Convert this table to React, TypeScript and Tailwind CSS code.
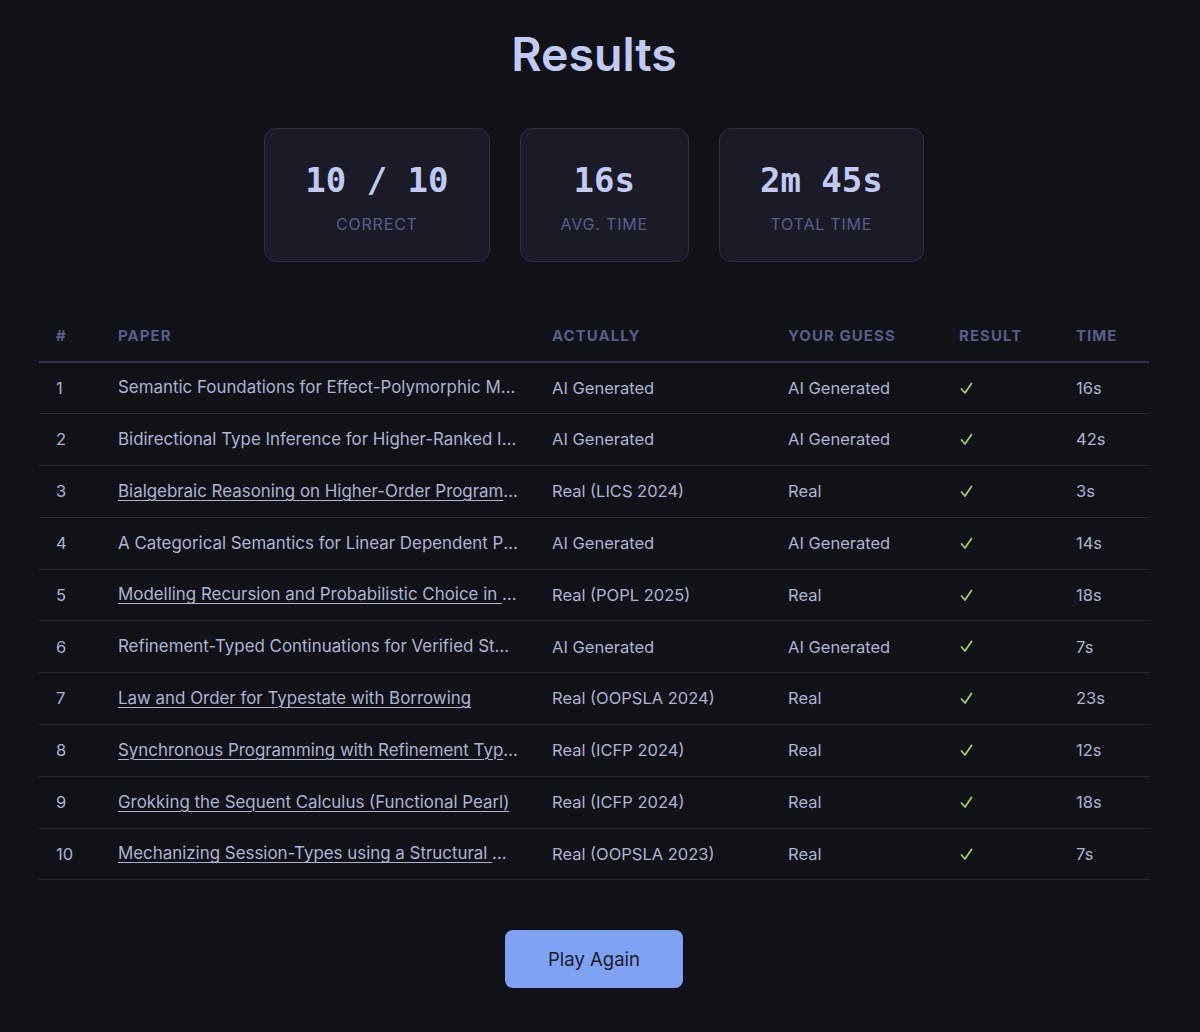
import React from "react";

const rows = [
  { n: 1, title: "Semantic Foundations for Effect-Polymorphic Memory Management", link: false, actual: "AI Generated", guess: "AI Generated", time: "16s" },
  { n: 2, title: "Bidirectional Type Inference for Higher-Ranked Impredicative Polymorphism", link: false, actual: "AI Generated", guess: "AI Generated", time: "42s" },
  { n: 3, title: "Bialgebraic Reasoning on Higher-Order Program Equivalence", link: true, actual: "Real (LICS 2024)", guess: "Real", time: "3s" },
  { n: 4, title: "A Categorical Semantics for Linear Dependent Pattern Matching", link: false, actual: "AI Generated", guess: "AI Generated", time: "14s" },
  { n: 5, title: "Modelling Recursion and Probabilistic Choice in Guarded Type Theory", link: true, actual: "Real (POPL 2025)", guess: "Real", time: "18s" },
  { n: 6, title: "Refinement-Typed Continuations for Verified Stateful Computation", link: false, actual: "AI Generated", guess: "AI Generated", time: "7s" },
  { n: 7, title: "Law and Order for Typestate with Borrowing", link: true, actual: "Real (OOPSLA 2024)", guess: "Real", time: "23s" },
  { n: 8, title: "Synchronous Programming with Refinement Types", link: true, actual: "Real (ICFP 2024)", guess: "Real", time: "12s" },
  { n: 9, title: "Grokking the Sequent Calculus (Functional Pearl)", link: true, actual: "Real (ICFP 2024)", guess: "Real", time: "18s" },
  { n: 10, title: "Mechanizing Session-Types using a Structural View", link: true, actual: "Real (OOPSLA 2023)", guess: "Real", time: "7s" },
];

function Stat({ value, label }: { value: string; label: string }) {
  return (
    <div className="flex flex-col items-center rounded-xl border border-[#2c2e44] bg-[#1a1b26] px-10 pt-[29px] pb-[25px]">
      <div className="text-[34px] font-bold leading-[44px] text-[#c0caf5] [font-family:'DejaVu_Sans_Mono',monospace]">
        {value}
      </div>
      <div className="mt-[10px] text-[16px] uppercase leading-6 tracking-[0.05em] text-[#565f89]">{label}</div>
    </div>
  );
}

function Check() {
  return (
    <svg width="13" height="13" viewBox="0 0 13 13" className="block">
      <path d="M1.5 7 L5 11 L11.5 1.5" fill="none" stroke="#9ece6a" strokeWidth="1.8" strokeLinecap="round" strokeLinejoin="round" />
    </svg>
  );
}

export default function App() {
  return (
    <div className="min-h-[1032px] w-full bg-[#111218] [font-family:Inter,'Noto_Sans',sans-serif]">
      <div className="flex w-[1110px] flex-col items-center pt-[22px] pb-[44px] ml-[39px]">
        <h1 className="text-[46.5px] font-semibold leading-[64px] text-[#c0caf5]">Results</h1>
        <div className="mt-[42px] flex gap-[30px]">
          <Stat value="10 / 10" label="Correct" />
          <Stat value="16s" label="Avg. Time" />
          <Stat value="2m 45s" label="Total Time" />
        </div>
        <table className="mt-[49px] w-full table-fixed border-collapse text-left">
          <colgroup>
            <col className="w-[63px]" />
            <col className="w-[434px]" />
            <col className="w-[236px]" />
            <col className="w-[171px]" />
            <col className="w-[117px]" />
            <col className="w-[89px]" />
          </colgroup>
          <thead>
            <tr className="border-b-2 border-[#2f3250] text-[15px] font-bold uppercase tracking-[0.07em] text-[#565f89]">
              <th className="h-[51px] px-[17px] font-bold">#</th>
              <th className="px-4 font-bold">Paper</th>
              <th className="px-4 font-bold">Actually</th>
              <th className="px-4 font-bold">Your Guess</th>
              <th className="px-4 font-bold">Result</th>
              <th className="px-4 font-bold">Time</th>
            </tr>
          </thead>
          <tbody className="text-[16.5px] text-[#adb4d2]">
            {rows.map((r) => (
              <tr key={r.n} className="h-[51.8px] border-b border-[#262838]">
                <td className="px-[17px]">{r.n}</td>
                <td className="px-4">
                  <div className="w-[400px] truncate text-[16.9px]">
                    {r.link ? (
                      <a href="#" className="underline decoration-1 underline-offset-[3px]">
                        {r.title}
                      </a>
                    ) : (
                      r.title
                    )}
                  </div>
                </td>
                <td className="px-4">{r.actual}</td>
                <td className="px-4">{r.guess}</td>
                <td className="px-4 pl-[17px]">
                  <Check />
                </td>
                <td className="px-4">{r.time}</td>
              </tr>
            ))}
          </tbody>
        </table>
        <button className="mt-[50px] rounded-lg bg-[#7fa2f5] px-[43px] py-[16px] text-[18.5px] leading-[26px] text-[#1a1b26]">
          Play Again
        </button>
      </div>
    </div>
  );
}
